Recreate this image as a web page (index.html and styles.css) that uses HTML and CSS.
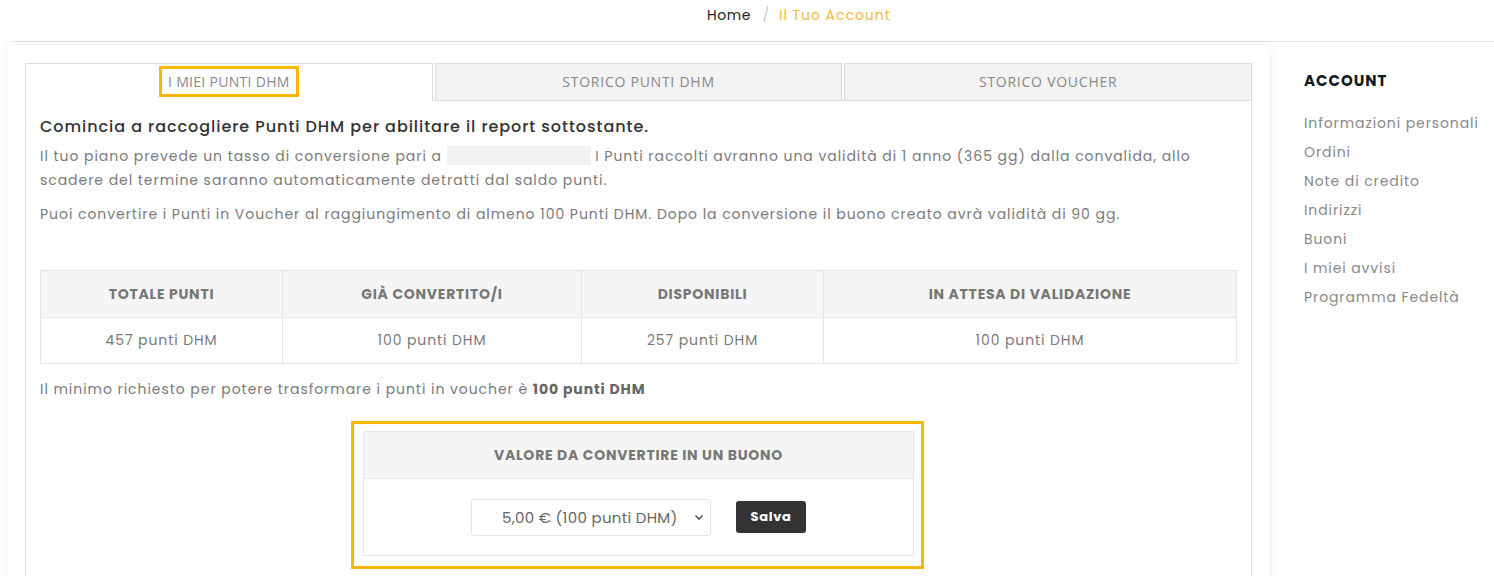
FILE: index.html
```html
<!DOCTYPE html>
<html lang="it">
<head>
    <meta charset="UTF-8">
    <meta name="viewport" content="width=device-width, initial-scale=1.0">
    <title>Il Tuo Account</title>
    <link rel="stylesheet" href="styles.css">
</head>

<body>
    <nav class="breadcrumb">
        <a href="#" class="crumb">Home</a>
        <span class="sep">/</span>
        <span class="crumb current">Il Tuo Account</span>
    </nav>

    <div class="page">
        <main class="card">
            <ul class="tabs">
                <li class="tab active"><span class="mark">I MIEI PUNTI DHM</span></li>
                <li class="tab">STORICO PUNTI DHM</li>
                <li class="tab">STORICO VOUCHER</li>
            </ul>
            <div class="panel">
                <h3 class="title">Comincia a raccogliere Punti DHM per abilitare il report sottostante.</h3>
                <p class="text">Il tuo piano prevede un tasso di conversione pari a <span class="blank"></span> I Punti raccolti avranno una validità di 1 anno (365 gg) dalla convalida, allo scadere del termine saranno automaticamente detratti dal saldo punti.</p>
                <p class="text">Puoi convertire i Punti in Voucher al raggiungimento di almeno 100 Punti DHM. Dopo la conversione il buono creato avrà validità di 90 gg.</p>

                <table class="points">
                    <thead>
                        <tr>
                            <th class="c1">TOTALE PUNTI</th>
                            <th class="c2">GIÀ CONVERTITO/I</th>
                            <th class="c3">DISPONIBILI</th>
                            <th>IN ATTESA DI VALIDAZIONE</th>
                        </tr>
                    </thead>
                    <tbody>
                        <tr>
                            <td>457 punti DHM</td>
                            <td>100 punti DHM</td>
                            <td>257 punti DHM</td>
                            <td>100 punti DHM</td>
                        </tr>
                    </tbody>
                </table>

                <p class="text min">Il minimo richiesto per potere trasformare i punti in voucher è <b>100 punti DHM</b></p>

                <div class="convert-wrap">
                    <table class="convert">
                        <thead>
                            <tr><th>VALORE DA CONVERTIRE IN UN BUONO</th></tr>
                        </thead>
                        <tbody>
                            <tr>
                                <td>
                                    <div class="convert-row">
                                        <div class="select">
                                            <span>5,00 € (100 punti DHM)</span>
                                            <svg width="10" height="7" viewBox="0 0 10 7"><path d="M1.5 1.5 L5 5 L8.5 1.5" fill="none" stroke="#555" stroke-width="1.6"/></svg>
                                        </div>
                                        <button class="btn">Salva</button>
                                    </div>
                                </td>
                            </tr>
                        </tbody>
                    </table>
                </div>
            </div>
        </main>

        <aside class="sidebar">
            <h4 class="side-title">ACCOUNT</h4>
            <ul class="side-links">
                <li><a href="#">Informazioni personali</a></li>
                <li><a href="#">Ordini</a></li>
                <li><a href="#">Note di credito</a></li>
                <li><a href="#">Indirizzi</a></li>
                <li><a href="#">Buoni</a></li>
                <li><a href="#">I miei avvisi</a></li>
                <li><a href="#">Programma Fedeltà</a></li>
            </ul>
        </aside>
    </div>
</body>
</html>
```

FILE: styles.css
```css
*, *:before, *:after {
    box-sizing: border-box;
}

body {
    margin: 0;
    background-color: #fff;
    font-family: "Poppins", "Open Sans", sans-serif;
    color: #7a7a7a;
    overflow: hidden;
}

a {
    text-decoration: none;
    color: inherit;
}

/* breadcrumb */
.breadcrumb {
    height: 42px;
    margin-left: 13px;
    padding: 5px 0 0 694px;
    border-bottom: 1px solid #e1e1e1;
    font-size: 14px;
    letter-spacing: 0.6px;
}
.breadcrumb .crumb {
    color: #222;
}
.breadcrumb .sep {
    color: #c8c8c8;
    margin: 0 7px 0 7px;
}
.breadcrumb .current {
    color: #f5b942;
    margin-left: -2px;
    letter-spacing: 0.95px;
}

/* layout */
.page {
    display: flex;
    align-items: flex-start;
    padding: 4px 0 0 8px;
}

.card {
    width: 1261px;
    height: 600px;
    padding: 17px 17px 0 17px;
    background: #fff;
    box-shadow: 0 0 12px rgba(0, 0, 0, 0.07);
}

/* tabs */
.tabs {
    display: flex;
    gap: 2px;
    margin: 0;
    padding: 0;
    list-style: none;
    width: 1227px;
}
.tab {
    flex: 1;
    height: 38px;
    display: flex;
    align-items: center;
    justify-content: center;
    padding-bottom: 1px;
    background: #f3f3f3;
    border: 1px solid #dcdcdc;
    font-family: "Open Sans", sans-serif;
    font-size: 14px;
    color: #888;
    letter-spacing: 0.75px;
}
.tab.active {
    background: #fff;
    border-bottom-color: #fff;
    position: relative;
    z-index: 1;
    letter-spacing: 0.3px;
}
.tab .mark {
    border: 3px solid #fbb800;
    padding: 3px 6px 3px 6px;
}

.panel {
    margin-top: -1px;
    width: 1227px;
    height: 600px;
    border: 1px solid #dcdcdc;
    border-bottom: none;
    padding: 13px 14px 0 14px;
}

.title {
    margin: 0 0 5px 0;
    font-size: 16px;
    font-weight: 500;
    color: #333;
    letter-spacing: 0.95px;
}

.text {
    margin: 0 0 10px 0;
    font-size: 14px;
    line-height: 24px;
    letter-spacing: 0.95px;
}
.text b {
    color: #666;
    letter-spacing: 0.9px;
}
.blank {
    display: inline-block;
    width: 144px;
    height: 19px;
    background: #f2f2f2;
    vertical-align: -4px;
}

/* points table */
.points {
    margin-top: 44px;
    width: 1197px;
    border-collapse: collapse;
}
.points th, .points td,
.convert th, .convert td {
    border: 1px solid #e6e6e6;
    text-align: center;
}
.points th, .convert th {
    height: 47px;
    background: #f5f5f5;
    font-size: 14px;
    font-weight: 700;
    color: #777;
    letter-spacing: 0.75px;
}
.points td {
    height: 46px;
    font-size: 14px;
    letter-spacing: 0.9px;
}
.points .c1 { width: 242px; }
.points .c2 { width: 299px; }
.points .c3 { width: 242px; }

.min {
    margin-top: 13px;
}

/* conversion */
.convert-wrap {
    width: 573px;
    margin: 20px 0 0 311px;
    border: 3px solid #fbb800;
    padding: 7px 7px 10px 9px;
}
.convert {
    width: 551px;
    border-collapse: collapse;
}
.convert td {
    height: 77px;
}
.convert-row {
    display: flex;
    align-items: center;
    justify-content: center;
    gap: 25px;
}
.select {
    width: 240px;
    height: 37px;
    display: flex;
    align-items: center;
    justify-content: space-between;
    padding: 0 6px 0 30px;
    border: 1px solid #e5e5e5;
    border-radius: 3px;
    font-size: 15px;
    color: #666;
    letter-spacing: 0.3px;
}
.btn {
    width: 70px;
    height: 32px;
    border: none;
    border-radius: 3px;
    background: #333;
    color: #fff;
    font-family: "Poppins", "Open Sans", sans-serif;
    font-size: 13px;
    font-weight: 700;
    letter-spacing: 0.7px;
}

/* sidebar */
.sidebar {
    padding: 23px 0 0 35px;
}
.side-title {
    margin: 0 0 21px 0;
    font-size: 15px;
    font-weight: 700;
    color: #111a24;
    letter-spacing: 1px;
}
.side-links {
    margin: 0;
    padding: 0;
    list-style: none;
}
.side-links li {
    height: 29px;
    font-size: 14px;
    color: #888;
    letter-spacing: 0.9px;
}
```
